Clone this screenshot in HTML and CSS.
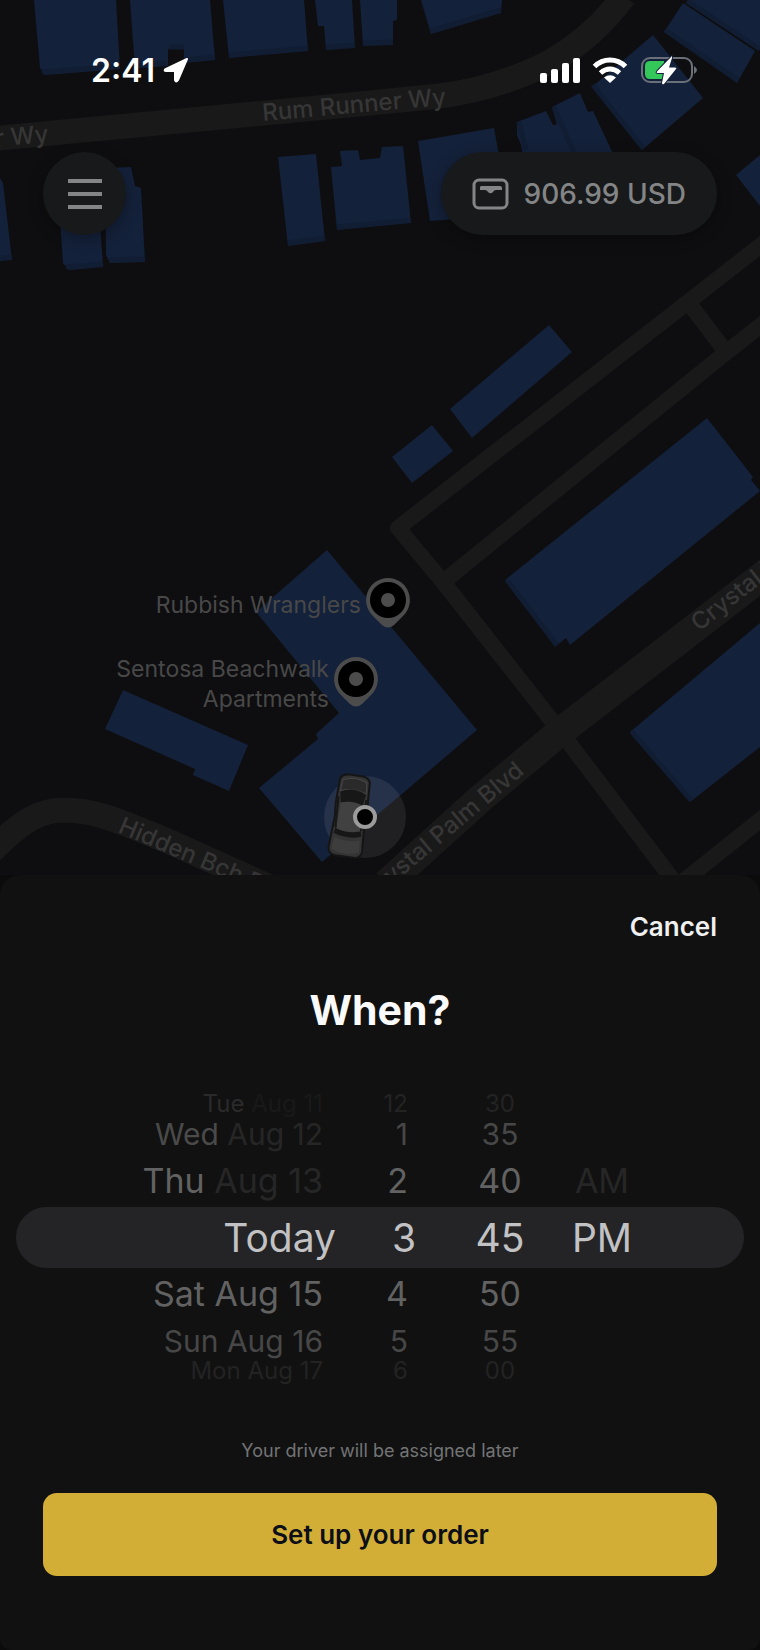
FILE: index.html
```html
<!DOCTYPE html>
<html lang="en">
<head>
<meta charset="utf-8">
<meta name="viewport" content="width=device-width, initial-scale=1">
<title>When?</title>
<link rel="stylesheet" href="styles.css">
</head>
<body>
<main class="screen">
  <section class="stage" aria-label="Map">
    <svg class="map" viewBox="0 0 760 876" preserveAspectRatio="xMidYMin slice" aria-hidden="true">
      <g class="road">
        <path stroke-width="25" d="M-10 139L380 102L440 96Q500 88 550 62Q594 37 624-4"/>
        <path stroke-width="16" stroke-linejoin="round" d="M770 238L688 302L398 528L443 582L560 731L676 884M443 582L723 355L770 318M688 302L726 352M680 884L770 812"/>
        <path stroke-width="29" d="M386 884L480 799L560 732L770 570"/>
        <path stroke-width="25" d="M-8 851C20 822 40 810 63 810C100 810 130 826 170 842L272 888"/>
      </g>
      <g class="building">
        <path d="M34 0H116L120 69L45 75L40 68Z"/>
        <path d="M130 0H210L215 60L184 63V49H168V66L135 68Z"/>
        <path d="M223 0H304L308 51L229 58Z"/>
        <path d="M315 0H352L355 48L326 50L324 26H318Z"/>
        <path d="M360 0H397V20L393 21V45L363 46Z"/>
        <path d="M421 0H502L501 13L431 34Z"/>
        <path d="M0 178L3 183L12 260L0 261Z"/>
        <path d="M58 190H98L103 267L69 270L63 263Z"/>
        <path d="M105 168L131 167L135 186L141 188L145 262L110 263L106 255Z"/>
        <path d="M278 157L316 154L325 241L288 246Z"/>
        <path d="M331 167L342 166L340 151L358 150L360 160L380 158L382 147L403 146L411 223L337 230Z"/>
        <path d="M418 141L494 128L510 215L430 221Z"/>
        <path d="M517 122L546 111L553 125L560 124L574 160H524L521 145L517 135Z"/>
        <path d="M552 107L580 93L588 112L593 111L616 160H572L557 125Z"/>
        <path d="M653 35L703 98L642 150L592 87Z"/>
        <path d="M683 3L755 51L737 83L664 32Z"/>
        <path d="M687 0H760V49Z"/>
        <path d="M736 175L760 155V206Z"/>
        <path d="M549 325L572 352L472 438L450 409Z"/>
        <path d="M432 425L453 451L412 483L392 457Z"/>
        <path d="M707 418L753 477L751 480L760 491L570 645L566 638L555 647L505 580Z"/>
        <path d="M760 623V747L690 802L630 732Z"/>
        <path d="M327 550L477 730L322 862L259 788L318 739L316 734L339 713L256 612Z"/>
        <path d="M123 690L248 745L229 791L193 775L195 769L105 729Z"/>
      </g>
      <g class="wall">
        <path d="M42 72L120 66M136 66L167 63M169 47H184M186 60L215 57M229 55L308 48M326 47L355 45M363 43L393 42M430 31L501 10M66 267L103 264M109 260L145 259M288 243L325 238M337 227L411 220M593 85L643 148M665 30L738 80M687 1L760 49M507 580L557 645M632 732L691 800M519 122L526 150M554 107L575 155M1 258L12 257"/>
      </g>
      <g class="street">
        <text transform="translate(263 121) rotate(-5)">Rum Runner Wy</text>
        <text transform="translate(49 142) rotate(-5)" text-anchor="end">Rum Runner Wy</text>
        <text transform="translate(117 832) rotate(23)">Hidden Bch Dr</text>
        <text transform="translate(525 773) rotate(-40)" text-anchor="end">Crystal Palm Blvd</text>
        <text transform="translate(699 632) rotate(-38)">Crystal Palm Blvd</text>
      </g>
      <g class="place">
        <text x="361" y="613">Rubbish Wranglers</text>
        <text x="329" y="677">Sentosa Beachwalk</text>
        <text x="329" y="707">Apartments</text>
      </g>
      <g transform="translate(388 600)">
        <path class="pin" d="M0-22A22 22 0 0 1 15 16L6 25Q0 30-6 25L-15 16A22 22 0 0 1 0-22Z"/>
        <circle r="18"/><circle class="pin" r="7"/>
      </g>
      <g transform="translate(356 679)">
        <path class="pin" d="M0-22A22 22 0 0 1 15 16L6 25Q0 30-6 25L-15 16A22 22 0 0 1 0-22Z"/>
        <circle r="18"/><circle class="pin" r="7"/>
      </g>
      <circle class="halo" cx="365" cy="817" r="41"/>
      <g transform="translate(350 816) rotate(8)">
        <path fill="#343434" stroke="#151515" stroke-width="2" d="M-15-36Q-13-41-6-41H6Q13-41 15-36L16-12L15 2L17 34Q16 41 9 41H-9Q-16 41-17 34L-15 2L-16-12Z"/>
        <path fill="#2a2a2a" stroke="#454545" d="M-12-35Q0-41 12-35L13-24Q0-29-13-24Z"/>
        <path fill="#171717" d="M-13-23Q0-30 13-23L11-12Q0-16-11-12ZM-14 19Q0 24 14 19L12 10H-12Z"/>
        <path fill="#414141" d="M-11-12Q0-16 11-12L12 14Q0 18-12 14Z"/>
        <path fill="#3d3d3d" d="M-13 23Q0 27 13 23L14 35Q0 41-14 35Z"/>
        <path fill="none" stroke="#171717" stroke-width="2" d="M-14-18L-13 13M14-18L13 13"/>
      </g>
      <circle cx="365" cy="817" r="10" stroke="#9b9b9b" stroke-width="4"/>
    </svg>

    <div class="overlay">
      <div class="status">
        <div class="clock">
          <span>2:41</span>
          <svg width="26" height="26" viewBox="0 0 26 26" aria-label="Location in use"><path fill="#fff" stroke="#fff" stroke-width="2" stroke-linejoin="round" d="M24 2L2 12.500Q1 14 3 14H12V23Q13 26 15 23Z"/></svg>
        </div>
        <div class="signals">
          <svg width="40" height="26" viewBox="0 0 40 26" fill="#fff" aria-label="Signal"><rect y="16" width="7" height="10" rx="2"/><rect x="11" y="12" width="7" height="14" rx="2"/><rect x="22" y="6" width="7" height="20" rx="2"/><rect x="33" y="1" width="7" height="25" rx="2"/></svg>
          <svg width="36" height="26" viewBox="0 0 36 26" aria-label="Wi-Fi"><g fill="none" stroke="#fff" stroke-width="5"><path d="M2.500 9.500Q9 3 18 3T33.500 9.500"/><path d="M8.500 16Q13 12 18 12T27.500 16"/></g><path fill="#fff" d="M12 20.500Q18 16 24 20.500L18 26Z"/></svg>
          <svg width="58" height="30" viewBox="0 0 58 30" aria-label="Battery charging"><rect x="2" y="3" width="50" height="24" rx="8" fill="none" stroke="#69707a" stroke-width="2"/><path fill="#69707a" d="M54 11Q60 15 54 19Z"/><path fill="#34c759" d="M10 6H24V24H10Q5 24 5 19V11Q5 6 10 6Z"/><path fill="#fff" stroke="#14213a" stroke-width="2" paint-order="stroke" stroke-linejoin="round" d="M32 1L17 16.500Q16 18 18 18H24L22 28Q22 30 24 29L36 14Q37 12.500 35 12.500H29L32 3Z"/></svg>
        </div>
      </div>
      <div class="controls">
        <button class="chip menu" type="button" aria-label="Menu">
          <svg width="34" height="30" viewBox="0 0 34 30" fill="#848586"><rect y="0" width="34" height="4"/><rect y="13" width="34" height="4"/><rect y="26" width="34" height="4"/></svg>
        </button>
        <button class="chip wallet" type="button">
          <svg width="38" height="32" viewBox="0 0 38 32"><rect x="2" y="2" width="33" height="28" rx="5" fill="none" stroke="#848586" stroke-width="3"/><path fill="#848586" d="M9 8H28Q30 8 30 10V12H24Q22 12 21 14Q18.500 16.500 16 14Q15 12 13 12H8V10Q8 8 9 8Z"/></svg>
          <span>906.99 USD</span>
        </button>
      </div>
    </div>
  </section>

  <section class="sheet">
    <button class="cancel" type="button">Cancel</button>
    <h1 class="title">When?</h1>
    <div class="picker">
      <div class="wheel date" role="group" aria-label="Date">
        <button class="item far faint" type="button"><span class="past">Tue</span> Aug 11</button>
        <button class="item mid faint" type="button"><span class="past">Wed</span> Aug 12</button>
        <button class="item near faint" type="button"><span class="past">Thu</span> Aug 13</button>
        <button class="item chosen" type="button" aria-pressed="true">Today</button>
        <button class="item near" type="button">Sat Aug 15</button>
        <button class="item mid" type="button">Sun Aug 16</button>
        <button class="item far" type="button">Mon Aug 17</button>
      </div>
      <div class="wheel hour" role="group" aria-label="Hour">
        <button class="item far" type="button">12</button>
        <button class="item mid" type="button">1</button>
        <button class="item near" type="button">2</button>
        <button class="item chosen" type="button" aria-pressed="true">3</button>
        <button class="item near" type="button">4</button>
        <button class="item mid" type="button">5</button>
        <button class="item far" type="button">6</button>
      </div>
      <div class="wheel minute" role="group" aria-label="Minute">
        <button class="item far" type="button">30</button>
        <button class="item mid" type="button">35</button>
        <button class="item near" type="button">40</button>
        <button class="item chosen" type="button" aria-pressed="true">45</button>
        <button class="item near" type="button">50</button>
        <button class="item mid" type="button">55</button>
        <button class="item far" type="button">00</button>
      </div>
      <div class="wheel period" role="group" aria-label="AM or PM">
        <button class="item near faint" type="button">AM</button>
        <button class="item chosen" type="button" aria-pressed="true">PM</button>
      </div>
    </div>
    <p class="note">Your driver will be assigned later</p>
    <button class="submit" type="button">Set up your order</button>
  </section>
</main>
</body>
</html>
```
FILE: styles.css
```css
* {
  box-sizing: border-box;
}

body {
  margin: 0;
  background: #0b0b0c;
  font-family: Inter, "Liberation Sans", sans-serif;
}

button {
  margin: 0;
  padding: 0;
  border: 0;
  background: none;
  color: inherit;
  font: inherit;
  cursor: pointer;
}

svg {
  display: block;
  flex: none;
}

.screen {
  display: flex;
  flex-direction: column;
  min-height: 100vh;
}

/* Map */
.stage {
  position: relative;
  flex: 1;
  min-height: 480px;
  overflow: hidden;
  background: #0e0e10;
}

.map {
  position: absolute;
  inset: 0;
  width: 100%;
  height: 100%;
}

.road {
  fill: none;
  stroke: #191919;
}

.building {
  fill: #14213a;
}

.wall {
  fill: none;
  stroke: #101d33;
  stroke-width: 5px;
}

.street {
  fill: #363636;
  font-size: 24px;
  font-weight: 500;
}

.place {
  fill: #484848;
  font-size: 23px;
  text-anchor: end;
}

.pin {
  fill: #4c4c4d;
}

.halo {
  fill: #ffffff;
  fill-opacity: 0.08;
}

.overlay {
  position: relative;
  display: flex;
  flex-direction: column;
  gap: 60px;
  padding: 48px 43px 0;
}

.status,
.controls,
.clock,
.signals {
  display: flex;
  align-items: center;
}

.status,
.controls {
  justify-content: space-between;
}

.status {
  height: 44px;
  padding: 0 19px 0 48px;
  color: #ffffff;
  font-size: 32px;
  font-weight: 600;
}

.clock {
  gap: 8px;
}

.signals {
  gap: 12px;
}

.chip {
  display: flex;
  align-items: center;
  justify-content: center;
  height: 83px;
  border-radius: 42px;
  background: #17191a;
  box-shadow: 0 4px 16px rgba(0, 0, 0, 0.3);
  color: #848586;
}

.menu {
  width: 83px;
}

.wallet {
  gap: 14px;
  padding: 0 31px;
  font-size: 28px;
  font-weight: 500;
}

/* Sheet */
.sheet {
  display: flex;
  flex-direction: column;
  padding: 30px 43px 74px;
  border-radius: 20px 20px 12px 12px;
  background: #111111;
}

.cancel {
  align-self: flex-end;
  color: #f0f0f0;
  font-size: 26px;
  font-weight: 600;
  line-height: 44px;
}

.title {
  margin: 36px 0 60px;
  color: #fafafa;
  font-size: 41px;
  font-weight: 700;
  line-height: 50px;
  text-align: center;
}

.picker {
  position: relative;
  display: grid;
  grid-template-columns: 220px 80px 144px 84px;
  justify-content: center;
  align-items: center;
  margin: 0 -27px;
}

.picker::before {
  position: absolute;
  top: 112px;
  right: 0;
  left: 0;
  height: 61px;
  border-radius: 31px;
  background: #242426;
  content: "";
}

.wheel {
  position: relative;
  display: flex;
  flex-direction: column;
}

.item {
  color: #626262;
  white-space: nowrap;
}

.chosen {
  color: #c2c2c4;
  font-size: 39px;
  line-height: 61px;
}

.near {
  font-size: 34px;
  line-height: 52px;
}

.mid {
  color: #474747;
  font-size: 30px;
  line-height: 42px;
}

.far {
  color: #232323;
  font-size: 24px;
  line-height: 18px;
}

.date .item {
  padding-right: 13px;
  text-align: right;
}

.hour .item {
  padding-right: 8px;
  text-align: right;
}

.date .chosen,
.hour .chosen {
  padding-right: 0;
}

.minute {
  padding-left: 24px;
}

.period {
  padding-bottom: 52px;
}

.faint {
  color: #262626;
}

.far.faint {
  color: #191919;
}

.near .past {
  color: #626262;
}

.mid .past {
  color: #4a4a4a;
}

.far .past {
  color: #2a2a2a;
}

.note {
  margin: 58px 0 30px;
  color: #737476;
  font-size: 18px;
  line-height: 25px;
  text-align: center;
}

.submit {
  height: 83px;
  border-radius: 14px;
  background: #d3ae37;
  color: #0c0e18;
  font-size: 26px;
  font-weight: 600;
}
```
